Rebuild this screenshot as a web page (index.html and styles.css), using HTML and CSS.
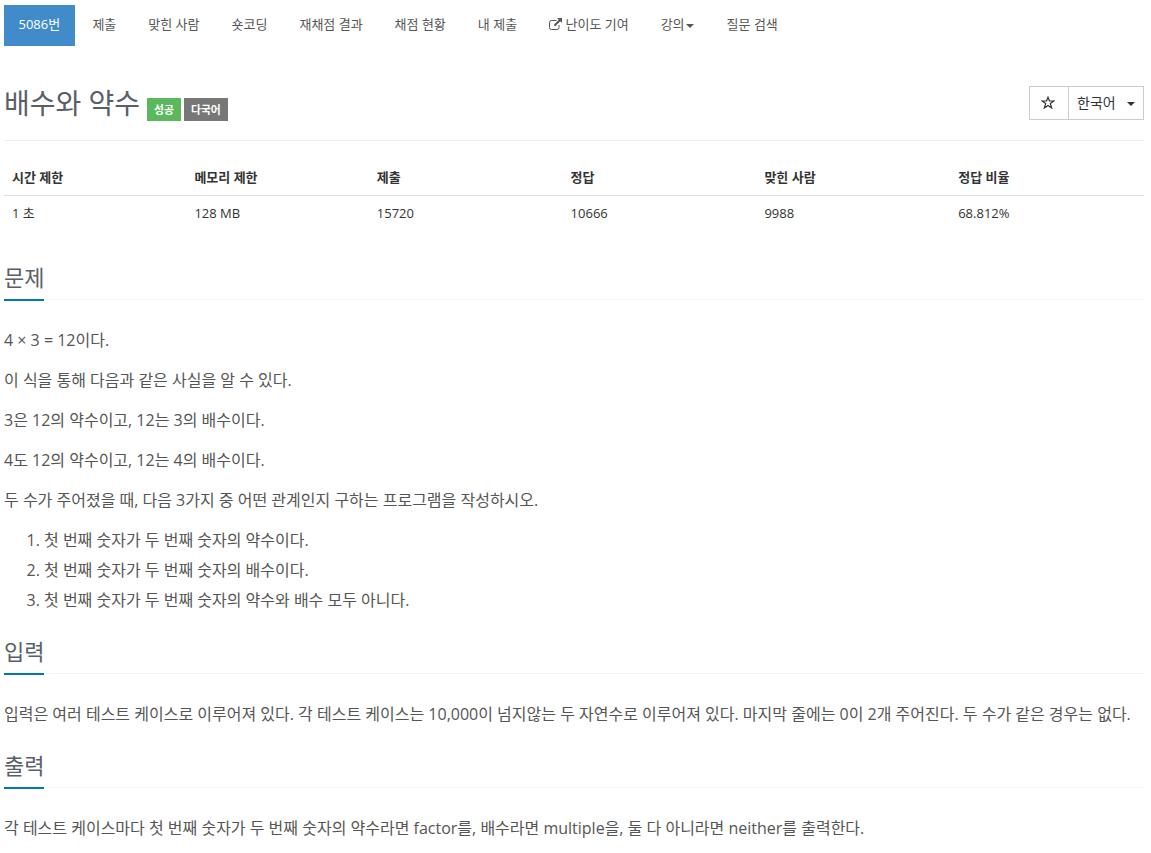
FILE: index.html
```
<!DOCTYPE html>
<html lang="ko">
<head>
  <meta charset="utf-8">
  <meta name="viewport" content="width=device-width">
  <title>5086번: 배수와 약수</title>
  <link rel="stylesheet" href="styles.css">
</head>
<body>
<div class="container">
  <ul class="problem-menu">
    <li class="active"><a href="#">5086번</a></li>
    <li><a href="#">제출</a></li>
    <li><a href="#">맞힌 사람</a></li>
    <li><a href="#">숏코딩</a></li>
    <li><a href="#">재채점 결과</a></li>
    <li><a href="#">채점 현황</a></li>
    <li><a href="#">내 제출</a></li>
    <li><a href="#"><svg class="icon-external" viewBox="0 0 13 12"><path d="M7.500 2.500H2.500Q.5 2.500 .5 4.500V9.500Q.5 11.500 2.500 11.500H8Q10 11.500 10 9.500V7" fill="none" stroke="currentColor"/><path d="M8 0H13V5L11.300 3.300L6.200 8.300L4.800 6.900L9.800 1.800Z" fill="currentColor"/></svg> 난이도 기여</a></li>
    <li><a href="#">강의<span class="caret"></span></a></li>
    <li><a href="#">질문 검색</a></li>
  </ul>

  <div class="page-header">
    <h1>배수와 약수</h1>
    <span class="label label-success">성공</span>
    <span class="label label-multilang">다국어</span>
    <div class="btn-group">
      <button class="btn btn-star"><svg class="icon-star" viewBox="0 0 14 13"><path d="M7 1.300L8.400 5H13L9.300 7.600L10.700 12L7 9.400L3.300 12L4.700 7.600L1 5H5.600Z" fill="none" stroke="currentColor" stroke-width="1.200"/></svg></button>
      <button class="btn btn-lang">한국어<span class="caret"></span></button>
    </div>
  </div>

  <table class="info">
    <thead>
      <tr>
        <th class="w16">시간 제한</th>
        <th class="w16">메모리 제한</th>
        <th class="w17">제출</th>
        <th class="w17">정답</th>
        <th class="w17">맞힌 사람</th>
        <th class="w17">정답 비율</th>
      </tr>
    </thead>
    <tbody>
      <tr><td>1 초</td><td>128 MB</td><td>15720</td><td>10666</td><td>9988</td><td>68.812%</td></tr>
    </tbody>
  </table>

  <section>
    <div class="headline"><h2>문제</h2></div>
    <div class="problem-text">
      <p>4 × 3 = 12이다.</p>
      <p>이 식을 통해 다음과 같은 사실을 알 수 있다.</p>
      <p>3은 12의 약수이고, 12는 3의 배수이다.</p>
      <p>4도 12의 약수이고, 12는 4의 배수이다.</p>
      <p>두 수가 주어졌을 때, 다음 3가지 중 어떤 관계인지 구하는 프로그램을 작성하시오.</p>
      <ol>
        <li>첫 번째 숫자가 두 번째 숫자의 약수이다.</li>
        <li>첫 번째 숫자가 두 번째 숫자의 배수이다.</li>
        <li>첫 번째 숫자가 두 번째 숫자의 약수와 배수 모두 아니다.</li>
      </ol>
    </div>
  </section>

  <section>
    <div class="headline"><h2>입력</h2></div>
    <div class="problem-text">
      <p>입력은 여러 테스트 케이스로 이루어져 있다. 각 테스트 케이스는 10,000이 넘지않는 두 자연수로 이루어져 있다. 마지막 줄에는 0이 2개 주어진다. 두 수가 같은 경우는 없다.</p>
    </div>
  </section>

  <section>
    <div class="headline"><h2>출력</h2></div>
    <div class="problem-text">
      <p>각 테스트 케이스마다 첫 번째 숫자가 두 번째 숫자의 약수라면 factor를, 배수라면 multiple을, 둘 다 아니라면 neither를 출력한다.</p>
    </div>
  </section>
</div>
</body>
</html>
```

FILE: styles.css
```
* {box-sizing:border-box;}
body {
  margin:0;
  background:#fff;
  color:#333;
  font-family:"Open Sans","Noto Sans CJK KR",sans-serif;
  font-size:13px;
  line-height:18.57px;
  overflow:hidden;
}
.container {width:1140px; margin-left:4px; padding-top:5px;}

/* top menu */
.problem-menu {display:flex; gap:2px; margin:0; padding:0; list-style:none;}
.problem-menu a {display:block; height:41px; padding:10px 15px; color:#555; text-decoration:none; white-space:nowrap;}
.problem-menu .active a {width:71.4px; padding:10px 14px 10px 14.5px; background:#428bca; color:#fff;}
.icon-external {width:13px; height:12px; vertical-align:-1px;}
.caret {display:inline-block; border-top:4px solid; border-left:4px solid transparent; border-right:4px solid transparent; vertical-align:middle;}
.problem-menu .caret {margin:0 1px;}

/* title */
.page-header {display:flex; align-items:flex-start; height:95px; padding-top:40px; border-bottom:1px solid #eee;}
h1 {width:135px; margin:-1px 8px 0 0; font-size:28px; font-weight:400; line-height:36px; color:#585f69; white-space:nowrap;}
.label {height:23px; margin:12px 3px 0 0; padding:0 7px; color:#fff; font-size:10.8px; font-weight:700; line-height:23px;}
.label-success {width:34px; background:#5cb85c;}
.label-multilang {width:44px; background:#777;}
.btn-group {display:flex; margin-left:auto;}
.btn {display:flex; align-items:center; height:34px; border:1px solid #ccc; background:#fff; color:#333; font:inherit;}
.btn-star {width:40px; justify-content:center; padding:0 2px 2px 0;}
.btn-lang {width:76px; margin-left:-1px; padding:0 8px; justify-content:space-between; font-size:14px;}
.btn-lang .caret {margin-top:2px;}
.icon-star {width:14px; height:13px;}

.info {width:100%; margin:19px 0 31px; border-collapse:collapse; table-layout:fixed;}
.info th, .info td {padding:8px; text-align:left;}
.info th {border-bottom:1px solid #ddd;}
.w16 {width:16%;}
.w17 {width:17%;}

/* problem sections */
.headline {margin:20px 0 25px; border-bottom:1px dotted #e4e9f0;}
h2 {display:table; margin:0 0 -2px; padding-bottom:6px; border-bottom:2px solid #0076c0; color:#585f69; font-size:22px; font-weight:400; line-height:32px;}
.problem-text {color:#555; font-size:16px; line-height:30px;}
.problem-text p {margin:0 0 10px;}
.problem-text ol {margin:0; padding-left:40px;}
section > .problem-text > p:last-child {margin-bottom:0;}
```
